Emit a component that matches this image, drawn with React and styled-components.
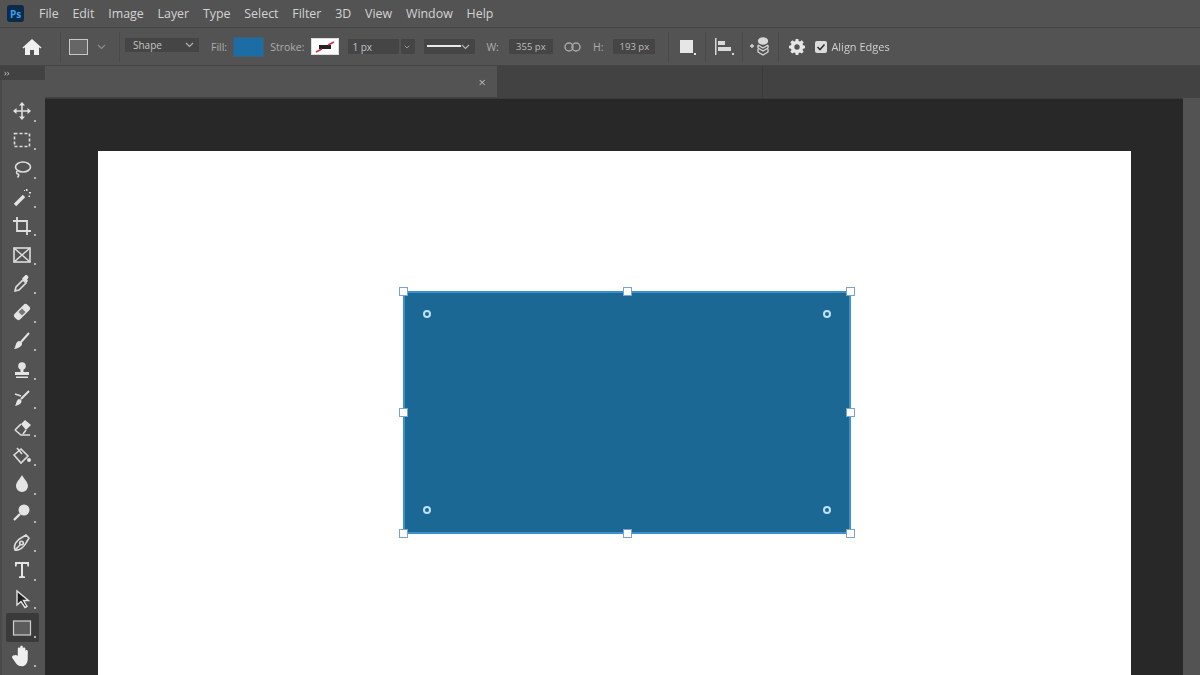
import React from 'react';
import styled, { createGlobalStyle } from 'styled-components';

const Global = createGlobalStyle`
  html, body { margin: 0; padding: 0; background: #282828; }
  body { font-family: "Open Sans", "Liberation Sans", sans-serif; overflow: hidden; }
`;

const Page = styled.div`
  width: 1200px;
  height: 675px;
  display: flex;
  flex-direction: column;
  overflow: hidden;
  filter: blur(0.45px);
`;

const MenuBar = styled.div`
  height: 27px;
  background: #535353;
  border-bottom: 1px solid #444;
  display: flex;
  align-items: center;
  padding-left: 7px;
  box-sizing: content-box;
`;

const PsLogo = styled.div`
  width: 17px;
  height: 17px;
  border-radius: 3px;
  background: #0c2a4a;
  color: #3aa0f0;
  font: 700 10px "Open Sans", sans-serif;
  display: flex;
  align-items: center;
  justify-content: center;
  margin-right: 15px;
`;

const MenuItem = styled.span`
  font-size: 12.4px;
  color: #d4d4d4;
  margin-right: 13.8px;
`;

const OptionsBar = styled.div`
  height: 37px;
  background: #535353;
  border-bottom: 1px solid #454545;
  display: flex;
  align-items: center;
  padding-left: 22px;
`;

const Divider = styled.div`
  width: 1px;
  height: 30px;
  background: #4a4a4a;
  margin-left: ${p => p.$ml}px;
`;

const Slot = styled.div`
  display: flex;
  align-items: center;
  margin-left: ${p => p.$ml || 0}px;
`;

const Select = styled.div`
  width: ${p => p.$w}px;
  height: ${p => p.$h || 14}px;
  background: #454545;
  margin-left: ${p => p.$ml || 0}px;
  margin-bottom: ${p => p.$up || 0}px;
  display: flex;
  align-items: center;
  justify-content: space-between;
  padding: 0 5px 0 ${p => p.$pl || 6}px;
  box-sizing: border-box;
  color: #c4c4c4;
  font-size: 10px;
`;

const Label = styled.span`
  font-size: 10.5px;
  color: #adadad;
  margin-left: ${p => p.$ml}px;
`;

const Swatch = styled.div`
  width: ${p => p.$w}px;
  height: ${p => p.$h}px;
  background: ${p => p.$bg};
  border: 1px solid ${p => p.$border};
  box-sizing: border-box;
  margin-left: ${p => p.$ml}px;
  display: flex;
  align-items: center;
  justify-content: center;
`;

const ValueField = styled.div`
  width: ${p => p.$w}px;
  height: 15px;
  background: #454545;
  margin-left: ${p => p.$ml}px;
  color: #bdbdbd;
  font-size: 9.5px;
  display: flex;
  align-items: center;
  justify-content: center;
`;

const AlignLabel = styled.span`
  font-size: 11px;
  color: #cfcfcf;
  margin-left: 4px;
`;

const Workspace = styled.div`
  flex: 1;
  display: flex;
  min-height: 0;
`;

const ToolPanel = styled.div`
  width: 45px;
  flex: none;
  display: flex;
  flex-direction: column;
  background: #535353;
  border-left: 2px solid #4a4a4a;
  box-sizing: border-box;
`;

const PanelHead = styled.div`
  height: 14px;
  background: #424242;
  color: #c8c8c8;
  font-size: 9px;
  line-height: 13px;
  padding-left: 4px;
  margin-left: -2px;
  margin-bottom: 17px;
`;

const ToolSlot = styled.div`
  position: relative;
  height: 28.7px;
  flex: none;
  display: flex;
  align-items: center;
  justify-content: center;
  margin: 0 6px 0 4px;
  padding-right: 1px;
  background: ${p => (p.$active ? '#3a3a3a' : 'transparent')};
  border-radius: 2px;
  &::after {
    content: '';
    position: absolute;
    right: 3px;
    bottom: 4px;
    width: 2px;
    height: 2px;
    background: #b5b5b5;
  }
`;

const Main = styled.div`
  flex: 1;
  min-width: 0;
  display: flex;
  flex-direction: column;
`;

const TabRow = styled.div`
  height: 32px;
  flex: none;
  background: #424242;
  display: flex;
  box-sizing: border-box;
`;

const Tab = styled.div`
  width: 452px;
  height: 31px;
  background: #535353;
  display: flex;
  align-items: center;
  justify-content: flex-end;
  padding-right: 11px;
  box-sizing: border-box;
  color: #b8b8b8;
  font-size: 13px;
`;

const TabRest = styled.div`
  width: 265px;
  border-right: 1px solid #3a3a3a;
`;

const CanvasRow = styled.div`
  flex: 1;
  min-height: 0;
  display: flex;
`;

const Canvas = styled.div`
  width: 1138px;
  flex: none;
  background: #282828;
  border-top: 1px solid #3a3a3a;
  padding: 52px 0 0 53px;
  box-sizing: border-box;
  overflow: hidden;
`;

const Artboard = styled.div`
  width: 1033px;
  height: 600px;
  background: #fff;
  padding: 140px 0 0 305px;
  box-sizing: border-box;
`;

const Shape = styled.div`
  position: relative;
  width: 448px;
  height: 243px;
  background: #1c6894;
  border: 2px solid #3f8fd0;
  box-sizing: border-box;
`;

const Handle = styled.div`
  position: absolute;
  width: 9px;
  height: 9px;
  background: #fff;
  border: 1px solid #7ba4cc;
  box-sizing: border-box;
  left: ${p => p.$x}px;
  top: ${p => p.$y}px;
`;

const CornerDot = styled.div`
  position: absolute;
  width: 8px;
  height: 8px;
  border-radius: 50%;
  background: #1c6894;
  border: 2px solid #bfe0f5;
  box-sizing: border-box;
  left: ${p => p.$x}px;
  top: ${p => p.$y}px;
`;

const RightStrip = styled.div`
  flex: 1;
  background: #535353;
`;

const Chevron = ({ color = '#b5b5b5' }) => (
  <svg width="9" height="6" viewBox="0 0 9 6" fill="none">
    <path d="M1 1l3.5 3.5L8 1" stroke={color} strokeWidth="1.1" />
  </svg>
);

const Icon = ({ children, size = 20, fill = 'none', stroke = '#dedede', sw = 1.6 }) => (
  <svg width={size} height={size} viewBox="0 0 20 20" fill={fill} stroke={stroke} strokeWidth={sw}>
    {children}
  </svg>
);

const C = '#e4e4e4';

const tools = [
  <Icon key="move"><path d="M10 3v14M3 10h14" /><path fill={C} stroke="none" d="M10 1l3 3.5H7zM10 19l-3-3.500h6zM1 10l3.500-3v6zM19 10l-3.500 3V7z" /></Icon>,
  <Icon key="marquee"><rect x="2.500" y="3.500" width="15" height="13" strokeDasharray="3 2" /></Icon>,
  <Icon key="lasso"><ellipse cx="11" cy="8" rx="7.500" ry="5" /><path d="M5 12c-1 2 0 3 1 3s1 2-0.500 3.500" /></Icon>,
  <Icon key="wand"><path d="M3 18L12 9" strokeWidth="3.400" stroke={C} /><path fill={C} stroke="none" d="M14 2h1.500v2H14zM17 5h2v1.500h-2zM12 3h1v1h-1zM16.500 8.500h1.500v1.500h-1.500z" /></Icon>,
  <Icon key="crop"><path d="M5 1v14h14M1 5h14v14" strokeWidth="1.800" /></Icon>,
  <Icon key="frame"><rect x="2" y="3" width="16" height="14" /><path d="M2 3l16 14M18 3L2 17" /></Icon>,
  <Icon key="dropper"><path d="M3 18l1-4 7-7 3 3-7 7z" /><path fill={C} stroke="none" d="M10 5.500l3-3c1.500-1.500 4.500 1.500 3 3l-1 1 1 1.500-1.500 1.500z" /></Icon>,
  <Icon key="heal"><g transform="rotate(-45 10 10)"><rect x="1" y="6" width="18" height="8" rx="3" fill={C} stroke="none" /><rect x="7.500" y="7.500" width="5" height="5" fill="#777" stroke="none" /></g></Icon>,
  <Icon key="brush"><path d="M9 11L17 2" strokeWidth="2" stroke={C} /><path fill={C} stroke="none" d="M7 10c3 0 4 3 2 5s-5 3-7 3c2-2 1-7 5-8z" /></Icon>,
  <Icon key="stamp" stroke="none" fill={C}><circle cx="10" cy="6" r="3.800" /><path d="M8.500 8h3v4h-3zM3 12h14v3H3zM4 16.500h12V18H4z" /></Icon>,
  <Icon key="history"><path d="M9 11l8-8" strokeWidth="2" stroke={C} /><path d="M3 6l6 2" /><path fill={C} stroke="none" d="M7 11c3 0 3 3 1.500 4.500S4 18 3 18c1.500-2 1-6 4-7z" /></Icon>,
  <Icon key="eraser"><path d="M3 13l6 5h3l-1 0" /><path fill={C} stroke="none" d="M9 7l4-4 6 5-5 5z" /><path d="M9 7l-6 6M14 13l-3 4M12 18h6" /></Icon>,
  <Icon key="bucket"><path d="M2 9l7 8 7-7-7-7z" /><path d="M5 2l5 6" /><circle cx="17" cy="14" r="2" fill={C} stroke="none" /></Icon>,
  <Icon key="drop" stroke="none" fill={C}><path d="M10 1c2 4 6 7 6 11a6 6 0 0 1-12 0c0-4 4-7 6-11z" /></Icon>,
  <Icon key="dodge"><circle cx="12" cy="7" r="5.500" fill={C} stroke="none" /><path d="M8 11l-6 6" strokeWidth="2.400" stroke={C} /></Icon>,
  <Icon key="pen"><path d="M3 18c-2-5 2-10 6-12l5-3 3 3-3 5c-2 4-7 8-11 7z" /><circle cx="9.500" cy="11" r="1.800" /><path d="M3 18l5-5" /></Icon>,
  <Icon key="type" stroke="none" fill={C}><path d="M3 2h14v4.500h-1.500L15 4h-4v12l2 .5V18H7v-1.500l2-.5V4H5l-.5 2.500H3z" /></Icon>,
  <Icon key="direct" fill="#1e1e1e" stroke={C} sw={1.400}><path d="M5 2v14l4-3.500 4 6 2-1-3.500-6h5z" /></Icon>,
  <Icon key="rect" stroke="#d0d0d0" sw={1.200}><rect x="1.500" y="3" width="17" height="14" fill="#5c5c5c" /></Icon>,
  <Icon key="hand" size={24} stroke="none" fill="#f0f0f0"><path d="M4 9.500c1-1 2.500.5 2.500.5V4c0-1.500 2-1.500 2 0V2.500c0-1.500 2.200-1.500 2.200 0V4c0-1.500 2.100-1.500 2.100 0v2c0-1.300 2-1.300 2 0v6c0 4-2 6.500-5 6.500-4 0-4.500-2-8-7-.5-1 .7-2.500 2.200-2z" /></Icon>,
];

const menu = ['File', 'Edit', 'Image', 'Layer', 'Type', 'Select', 'Filter', '3D', 'View', 'Window', 'Help'];

const handles = [
  [-6.5, -6.5], [217.5, -6.5], [440.5, -6.5],
  [-6.5, 114.5], [440.5, 114.5],
  [-6.5, 235.5], [217.5, 235.5], [440.5, 235.5],
];

const dots = [
  [18, 17], [418, 17], [18, 213], [418, 213],
];

const App = () => (
  <Page>
    <Global />
    <MenuBar>
      <PsLogo>Ps</PsLogo>
      {menu.map(m => <MenuItem key={m}>{m}</MenuItem>)}
    </MenuBar>

    <OptionsBar>
      <Icon fill="#f0f0f0" stroke="none">
        <path d="M10 2L0.500 10.500l1 1L3 10.300V18h5v-5h4v5h5v-7.700l1.500 1.200 1-1z" />
      </Icon>
      <Divider $ml={18} />
      <Slot $ml={8}>
        <Swatch $w={19} $h={16} $bg="#666" $border="#c8c8c8" $ml={0} />
      </Slot>
      <Slot $ml={9}><Chevron color="#8c8c8c" /></Slot>
      <Divider $ml={13} />
      <Select $w={74} $ml={5} $pl={8} $up={3}>Shape <Chevron /></Select>
      <Label $ml={12}>Fill:</Label>
      <Swatch $w={31} $h={20} $bg="#1c6da6" $border="#3f5f73" $ml={6} />
      <Label $ml={6}>Stroke:</Label>
      <Swatch $w={28} $h={17} $bg="#fff" $border="#ddd" $ml={7}>
        <svg width="22" height="12" viewBox="0 0 22 12">
          <rect x="5" y="4" width="12" height="4" fill="#222" />
          <path d="M2 11l6-3M14 4l6-3" stroke="#d03040" strokeWidth="1.600" />
        </svg>
      </Swatch>
      <Select $w={51} $h={15} $ml={9} $pl={4}>1 px</Select>
      <Select $w={14} $h={15} $ml={2} $pl={3}><Chevron /></Select>
      <Select $w={51} $h={15} $ml={9} $pl={3}>
        <svg width="34" height="3"><rect width="34" height="2" fill="#e8e8e8" /></svg>
        <Chevron />
      </Select>
      <Label $ml={11}>W:</Label>
      <ValueField $w={44} $ml={10}>355 px</ValueField>
      <Slot $ml={11}>
        <svg width="17" height="10" viewBox="0 0 17 10" fill="none" stroke="#a8a8a8" strokeWidth="1.500">
          <circle cx="5" cy="5" r="4" />
          <circle cx="12" cy="5" r="4" />
        </svg>
      </Slot>
      <Label $ml={12}>H:</Label>
      <ValueField $w={42} $ml={10}>193 px</ValueField>
      <Divider $ml={13} />
      <Slot $ml={11}>
        <svg width="16" height="16" viewBox="0 0 16 16" fill="#e6e6e6">
          <rect x="0" y="1" width="13" height="13" />
          <rect x="14" y="14" width="2" height="2" />
        </svg>
      </Slot>
      <Divider $ml={9} />
      <Slot $ml={9}>
        <svg width="19" height="18" viewBox="0 0 19 18" fill="#d8d8d8">
          <rect x="0" y="0" width="1.500" height="17" />
          <rect x="3" y="3" width="7" height="4" />
          <rect x="3" y="9" width="13" height="4" />
          <rect x="17" y="15" width="2" height="2" />
        </svg>
      </Slot>
      <Divider $ml={8} />
      <Slot $ml={7}>
        <svg width="21" height="20" viewBox="0 0 21 20" fill="none" stroke="#d8d8d8" strokeWidth="1.300">
          <path d="M0 9h4M2 7v4" />
          <ellipse cx="13" cy="4" rx="4.500" ry="3" fill="#d8d8d8" />
          <path d="M8 8l5 3 5-3M8 8v3l5 3 5-3V8M8 12v3l5 3 5-3v-3" />
        </svg>
      </Slot>
      <Divider $ml={7} />
      <Slot $ml={10}>
        <svg width="16" height="16" viewBox="-1 0 18 18" fill="#e6e6e6">
          <path fillRule="evenodd" d="M6.500 0h3l.4 2.200 1.500.6L13.300 1.500l2.200 2.200-1.300 1.900.6 1.500 2.200.4v3l-2.200.4-.6 1.500 1.300 1.900-2.200 2.100-1.900-1.300-1.500.6-.4 2.200h-3l-.4-2.200-1.500-.6-1.900 1.300L.5 14.300l1.300-1.900-.6-1.500L-1 10.500v-3l2.200-.4.6-1.500L.5 3.700l2.200-2.200 1.900 1.300 1.500-.6zM8 6a3 3 0 1 0 0 6 3 3 0 0 0 0-6z" />
        </svg>
      </Slot>
      <Slot $ml={10}>
        <svg width="12" height="12" viewBox="0 0 12 12">
          <rect width="12" height="12" rx="2" fill="#dcdcdc" />
          <path d="M2.500 6l2.500 2.500 4.500-5" stroke="#333" strokeWidth="1.600" fill="none" />
        </svg>
      </Slot>
      <AlignLabel>Align Edges</AlignLabel>
    </OptionsBar>

    <Workspace>
      <ToolPanel>
        <PanelHead>››</PanelHead>
        {tools.map((tool, i) => (
          <ToolSlot key={i} $active={i === 18}>{tool}</ToolSlot>
        ))}
      </ToolPanel>
      <Main>
        <TabRow>
          <Tab>×</Tab>
          <TabRest />
        </TabRow>
        <CanvasRow>
          <Canvas>
            <Artboard>
              <Shape>
                {handles.map(([x, y]) => <Handle key={`${x}-${y}`} $x={x} $y={y} />)}
                {dots.map(([x, y]) => <CornerDot key={`${x}-${y}`} $x={x} $y={y} />)}
              </Shape>
            </Artboard>
          </Canvas>
          <RightStrip />
        </CanvasRow>
      </Main>
    </Workspace>
  </Page>
);

export default App;
